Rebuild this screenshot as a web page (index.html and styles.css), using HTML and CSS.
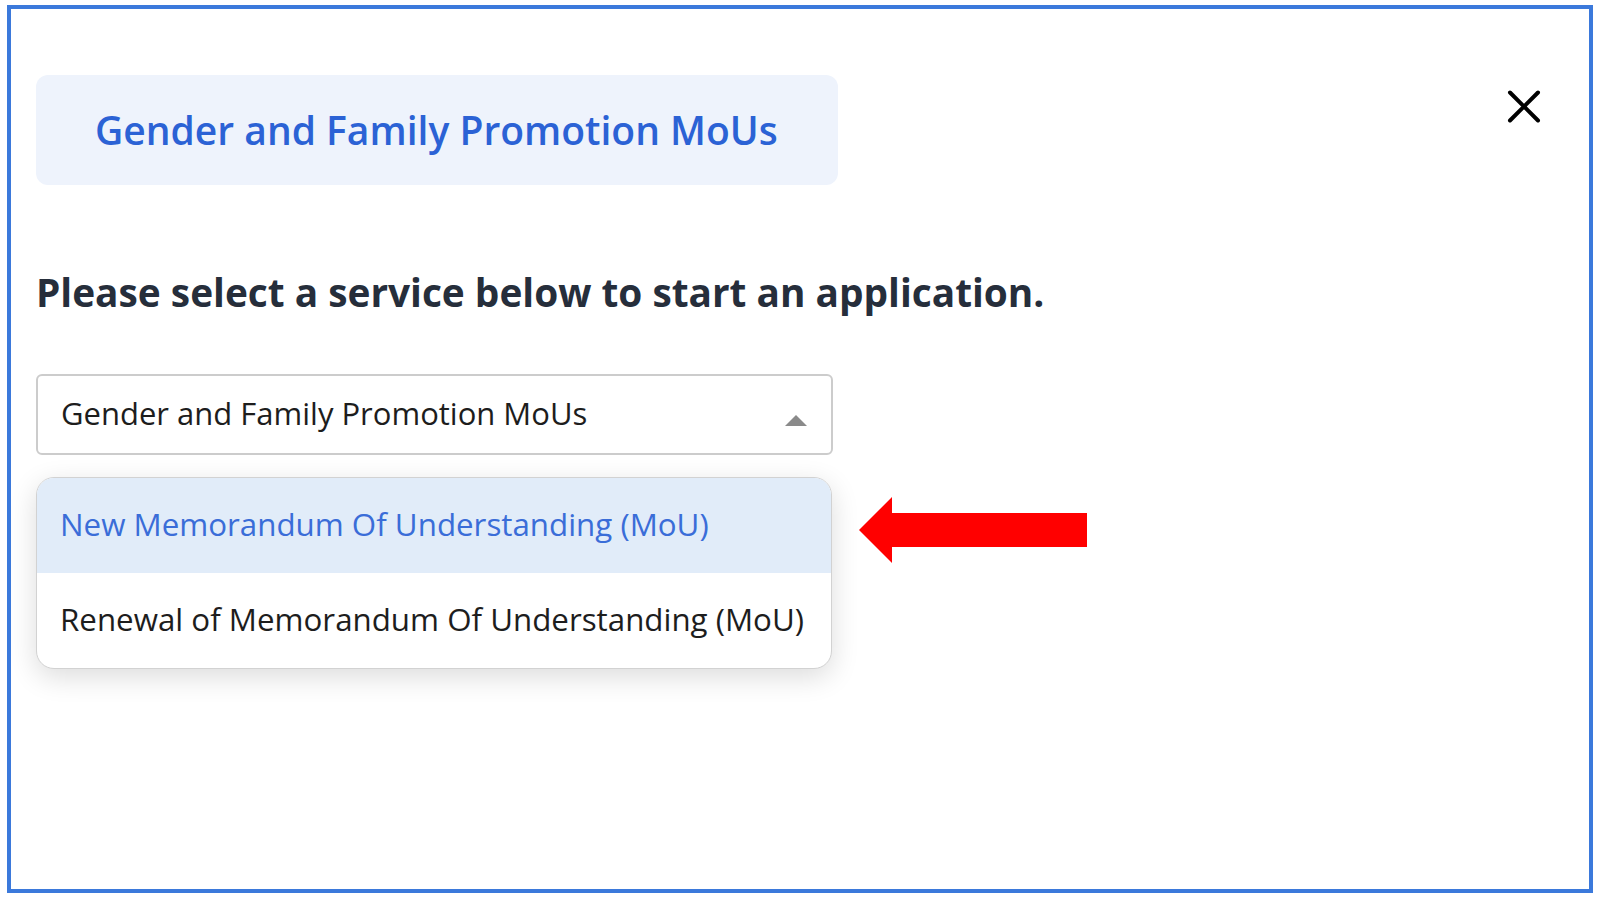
FILE: index.html
```html
<!DOCTYPE html>
<html lang="en">
<head>
<meta charset="utf-8">
<title>Gender and Family Promotion MoUs</title>
<link rel="stylesheet" href="styles.css">
</head>
<body>
<div class="page">
  <div class="frame">
    <div class="header">
      <div class="title-box"><span class="title">Gender and Family Promotion MoUs</span></div>
      <button class="close" aria-label="Close">
        <svg width="34" height="33" viewBox="0 0 34 33"><path d="M3 2.5 L31 30.5 M31 2.5 L3 30.5" stroke="#000" stroke-width="4" stroke-linecap="round" fill="none"/></svg>
      </button>
    </div>
    <h2 class="prompt">Please select a service below to start an application.</h2>
    <div class="select">
      <span class="select-value">Gender and Family Promotion MoUs</span>
      <span class="caret"></span>
    </div>
    <div class="menu-row">
      <ul class="menu">
        <li class="option active">New Memorandum Of Understanding (MoU)</li>
        <li class="option">Renewal of Memorandum Of Understanding (MoU)</li>
      </ul>
      <svg class="arrow" width="228" height="67" viewBox="0 0 228 67"><polygon points="0,33 33,0 33,16 228,16 228,50 33,50 33,66" fill="#ff0000"/></svg>
    </div>
  </div>
</div>
</body>
</html>
```
FILE: styles.css
```css
* { box-sizing: border-box; }
html, body { margin: 0; padding: 0; background: #fff; }
body { font-family: "Open Sans", "Noto Sans", sans-serif; }
.page { padding: 5px 7px 9px 7px; height: 902px; }
.frame {
  border: 4px solid #3b79db;
  height: 888px;
  padding: 66px 48px 0 25px;
}
.header { display: flex; justify-content: space-between; align-items: flex-start; }
.title-box {
  width: 802px;
  height: 110px;
  background: #eef3fc;
  border-radius: 12px;
  display: flex;
  align-items: center;
  padding-left: 59px;
}
.title { font-size: 39px; font-weight: 600; color: #2b62d5; line-height: 48px; }
.close { background: none; border: 0; padding: 0; margin-top: 15px; cursor: pointer; line-height: 0; }
.prompt {
  margin: 83px 0 0 0;
  font-size: 38.8px;
  line-height: 48px;
  font-weight: 700;
  color: #262e3b;
}
.select {
  margin-top: 58px;
  width: 797px;
  height: 81px;
  border: 2px solid #cccccc;
  border-radius: 6px;
  padding: 19px 24px 0 23px;
  display: flex;
  justify-content: space-between;
  align-items: flex-start;
}
.select-value { font-size: 31px; line-height: 37px; color: #1d1d1d; }
.caret {
  margin-top: 20px;
  width: 0; height: 0;
  border-left: 11px solid transparent;
  border-right: 11px solid transparent;
  border-bottom: 11px solid #8a8a8a;
}
.menu-row { display: flex; align-items: flex-start; margin-top: 22px; }
.menu {
  list-style: none;
  margin: 0;
  padding: 0;
  width: 796px;
  border: 1.5px solid #d2d2d2;
  border-radius: 18px;
  overflow: hidden;
  box-shadow: 0 8px 28px rgba(0,0,0,0.14);
  background: #fff;
}
.option {
  height: 95px;
  padding: 28px 24px 0 23px;
  font-size: 31.3px;
  line-height: 37px;
  color: #1d1d1d;
}
.option.active { background: #e1ecf9; color: #3a6dd8; }
.arrow { margin-left: 27px; margin-top: 20px; }
```
